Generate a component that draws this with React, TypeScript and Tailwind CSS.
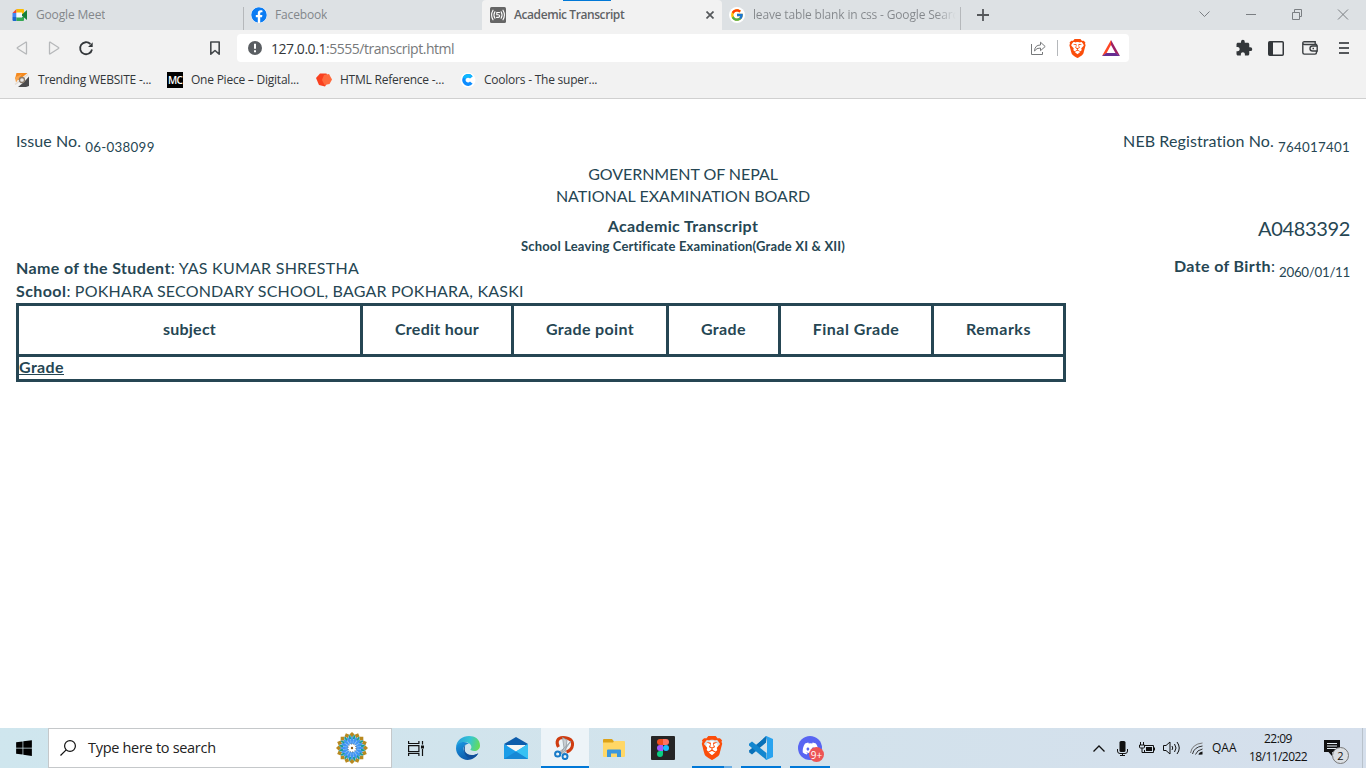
import type { ReactNode } from "react";
import { FaDiscord, FaFacebook, FaWindows } from "react-icons/fa";
import { FcGoogle } from "react-icons/fc";
import { SiBrave } from "react-icons/si";
import { MdExtension } from "react-icons/md";

function MeetIcon() {
  return (
    <svg width="16" height="16" viewBox="0 0 16 16">
      <path d="M.5 6l4-4v4z" fill="#ea4335" />
      <path d="M4.500 2h6.500v4H4.500z" fill="#fbbc04" />
      <path d="M.5 6h4v4h-4z" fill="#4285f4" />
      <path d="M.5 10h4v4h-3a1 1 0 0 1-1-1z" fill="#1967d2" />
      <path d="M4.500 10H12v3a1 1 0 0 1-1 1H4.500z" fill="#34a853" />
      <path d="M9 8l6-5v10z" fill="#188038" />
      <path d="M10 2h1a1 1 0 0 1 1 1v2.500L9 8z" fill="#fbbc04" />
      <path d="M4.500 5.500H10v5H4.500z" fill="#f4f8ff" />
    </svg>
  );
}

function ServerIcon() {
  return (
    <svg width="16" height="16" viewBox="0 0 16 16">
      <rect width="16" height="16" rx="1.500" fill="#666" />
      <g fill="none" stroke="#fff" strokeWidth="1.100" strokeLinecap="round">
        <path d="M3 3.200Q.2 8 3 12.800M13 3.200Q15.800 8 13 12.800" />
        <path d="M4.900 4.800Q3 8 4.900 11.200M11.100 4.800Q13 8 11.100 11.200" />
        <path d="M9.500 5.500H6.800v2.200h1.500q1.300 0 1.300 1.300T8.200 10.400H6.600" />
      </g>
    </svg>
  );
}

function BraveIcon({ size }: { size: number }) {
  return (
    <span className="grid place-items-center">
      <span className="col-start-1 row-start-1 h-[60%] w-[50%] rounded-full bg-white" />
      <SiBrave size={size} color="#fb4d0a" className="col-start-1 row-start-1" />
    </span>
  );
}

function Tab({ icon, title, className }: { icon: ReactNode; title: string; className: string }) {
  return (
    <div className={`flex h-[30px] shrink-0 items-center whitespace-nowrap ${className}`}>
      {icon}
      <span className="ml-2 overflow-hidden">{title}</span>
    </div>
  );
}

function TabStrip() {
  return (
    <div className="flex h-[30px] bg-[#dde1e4] text-[12px] tracking-[-0.16px] text-[#83878b]">
      <Tab className="w-[243px] pl-3" icon={<MeetIcon />} title="Google Meet" />
      <div className="mt-[7px] h-[23px] w-px bg-[#b5b8bb]" />
      <Tab className="w-[238px] pl-[7px]" icon={<FaFacebook size={16} color="#0b7cf3" className="rounded-full bg-white" />} title="Facebook" />
      <div className="relative flex h-[30px] w-[240px] items-center rounded-t bg-[#f2f2f2] pl-2 font-semibold tracking-[-0.42px] text-[#5f6265]">
        <div className="absolute left-[81px] top-0 h-px w-12 bg-[#0078d7]" />
        <ServerIcon />
        <span className="ml-2 grow">Academic Transcript</span>
        <svg width="8" height="8" viewBox="0 0 8 8" className="mr-2">
          <path d="M.5 .5l7 7M7.500 .5l-7 7" stroke="#55585b" strokeWidth="1.700" />
        </svg>
      </div>
      <Tab
        className="w-[238px] pl-[7px] pr-[4px] [&>span:last-child]:bg-gradient-to-r [&>span:last-child]:from-[#83878b] [&>span:last-child]:from-90% [&>span:last-child]:to-[#dde1e4] [&>span:last-child]:bg-clip-text [&>span:last-child]:text-transparent"
        icon={<span className="shrink-0 rounded-full bg-white p-px"><FcGoogle size={14} /></span>}
        title="leave table blank in css - Google Search"
      />
      <div className="mt-[7px] h-[23px] w-px bg-[#b5b8bb]" />
      <svg width="12" height="12" viewBox="0 0 12 12" className="ml-4 mt-[9px]">
        <path d="M6 0v12M0 6h12" stroke="#55585b" strokeWidth="1.800" />
      </svg>
      <svg width="170" height="30" viewBox="-10 0 170 30" className="ml-auto" fill="none" stroke="#7a7e82">
        <path d="M-6.500 11.500l5 5 5-5" />
        <path d="M40 14.500h10" />
        <path d="M86.500 12.500h7v7h-7zM88.500 12v-2.500h7v7H94" />
        <path d="M132 9.500l10 10M142 9.500l-10 10" />
      </svg>
    </div>
  );
}

function Toolbar() {
  return (
    <div className="flex h-9 items-center bg-[#f2f2f2]">
      <svg width="237" height="36" viewBox="0 30 237 36" fill="none">
        <path d="M26.500 42.500v11q0 .8-.8.3L17.500 48.500q-.6-.5 0-1l8.200-5.300q.8-.4.800.3zM49.500 42.500v11q0 .8.8.3l8.200-5.300q.6-.5 0-1l-8.200-5.300q-.8-.4-.8.300z" stroke="#b6b8ba" strokeWidth="1.300" />
        <path d="M90.400 44A6 6 0 1 0 92 49.500" stroke="#33373a" strokeWidth="1.800" />
        <path d="M92.700 42.300v4.600h-4.600z" fill="#33373a" />
        <path d="M210.800 42h8.400v12.200L215 50.500l-4.200 3.700z" stroke="#45494c" strokeWidth="1.600" strokeLinejoin="round" />
      </svg>
      <div className="flex h-7 w-[892px] items-center rounded bg-white">
        <svg width="14" height="14" viewBox="0 0 14 14" className="ml-[11px]">
          <circle cx="7" cy="7" r="7" fill="#5a5e62" />
          <path d="M7 2.800v5M7 9.300v2" stroke="#fff" strokeWidth="2" />
        </svg>
        <span className="ml-[9px] mt-px text-[14px] tracking-[-0.46px] text-[#77797b]"><span className="text-[#33373a]">127.0.0.1</span>:5555/transcript.html</span>
        <svg width="27" height="16" viewBox="0 0 27 16" fill="none" stroke="#77797b" className="ml-auto">
          <path d="M.5 4v10.500h11V12" />
          <path d="M3.500 11q.3-6 6-6V2.200l4.700 4.300-4.700 4.200V8Q5.500 7.800 3.500 11z" strokeLinejoin="round" />
          <path d="M26.500 0v16" stroke="#b5b8bb" />
        </svg>
        <div className="ml-[10px] flex w-[18px] justify-center"><BraveIcon size={19} /></div>
        <svg width="18" height="16" viewBox="0 0 18 16" className="ml-4 mr-[9px]">
          <path d="M9 0L0 16l4.300-2.500L9 5z" fill="#ff4724" />
          <path d="M9 0l9 16-4.300-2.500L9 5z" fill="#9e1f63" />
          <path d="M0 16h18l-4.300-3H4.300z" fill="#662d91" />
        </svg>
      </div>
      <div className="ml-[106px] flex items-center">
        <MdExtension size={18} color="#33373a" />
        <svg width="16" height="15" viewBox="0 0 16 15" className="ml-[15px]">
          <rect x=".75" y=".75" width="14.500" height="13.500" rx="1" fill="none" stroke="#33373a" strokeWidth="1.500" />
          <path d="M1 1h4v13H1z" fill="#33373a" />
        </svg>
        <svg width="16" height="14" viewBox="0 0 16 14" className="ml-[18px]" fill="none" stroke="#3b3f42" strokeWidth="1.400">
          <path d="M14.500 5V3.500H2.500Q.8 3.400.8 2T2.500.8h10.700v2.500M.8 2v9.600q0 1.500 1.500 1.500h10.700q1.500 0 1.500-1.500V10" />
          <path d="M15.200 5H10.500a2.500 2.500 0 0 0 0 5h4.700zM10.500 7.500h1.500" />
        </svg>
        <svg width="10" height="12" viewBox="0 0 10 12" className="ml-[21px]">
          <path d="M0 1h10M0 6h10M0 11h10" stroke="#55585b" strokeWidth="1.800" />
        </svg>
      </div>
    </div>
  );
}

function Bookmark({ icon, label, className }: { icon: ReactNode; label: string; className: string }) {
  return (
    <div className={`flex items-center gap-2 ${className}`}>
      {icon}
      <span>{label}</span>
    </div>
  );
}

function Bookmarks() {
  return (
    <div className="flex h-[33px] items-center border-b border-[#d0d0d0] bg-[#f2f2f2] pb-1 pl-[14px] text-[12px] tracking-[-0.23px] text-[#33373a]">
      <Bookmark
        className="w-[153px]"
        label="Trending WEBSITE -..."
        icon={
          <svg width="16" height="16" viewBox="0 0 16 16">
            <path d="M2.500 1h11L5 8 1 7z" fill="#f58a1f" />
            <path d="M1 5.500l7-3.500-6 8.500z" fill="#f9a54e" />
            <path d="M15 4.500V14l-3 1H4l6-5z" fill="#4b4b4d" />
            <path d="M1 12.500L14 2.500" stroke="#e4dcd4" strokeWidth="1.500" />
            <circle cx="8" cy="8" r="2.500" fill="#e8e8e8" stroke="#8b7b6b" strokeWidth="1.300" />
          </svg>
        }
      />
      <Bookmark
        className="w-[149px]"
        label="One Piece – Digital..."
        icon={<span className="flex h-4 w-4 items-center justify-center bg-black text-[10px] font-semibold leading-none tracking-[-0.8px] text-white">MC</span>}
      />
      <Bookmark
        className="w-36"
        label="HTML Reference -..."
        icon={
          <svg width="16" height="16" viewBox="0 0 16 16">
            <path d="M4 1.500h6.500L13 8l-4 6.500L3 13 0 6z" fill="#f9401f" />
            <path d="M8 3l5-1 3 5.500-2.500 4.500-5 1L6 8z" fill="#ff6a3d" />
          </svg>
        }
      />
      <Bookmark
        className=""
        label="Coolors - The super..."
        icon={
          <svg width="16" height="16" viewBox="0 0 16 16">
            <circle cx="8" cy="8" r="7.500" fill="#fff" />
            <path d="M11.300 5.300A4.200 4.200 0 1 0 11.300 10.700" fill="none" stroke="#0c8cff" strokeWidth="3.400" />
            <path d="M4.200 6.200A4.200 4.200 0 0 1 11.300 5.300" fill="none" stroke="#10b8ff" strokeWidth="3.400" />
          </svg>
        }
      />
    </div>
  );
}

function Transcript() {
  return (
    <main className="flex grow flex-col bg-white px-4 pt-[31px] font-['Lato',sans-serif] text-base leading-[22px] text-[#264653] [font-variant-ligatures:none]">
      <div className="flex h-[33px] justify-between">
        <p><span className="tracking-[0.07px]">Issue No. </span><sub className="-bottom-[5px] text-[13.33px] tracking-[0.3px]">06-038099</sub></p>
        <p><span className="tracking-[0.1px]">NEB Registration No. </span><sub className="-bottom-[5px] text-[13.33px] tracking-[0.27px]">764017401</sub></p>
      </div>
      <div className="h-[52px] text-center">
        <p className="tracking-[-0.06px]">GOVERNMENT OF NEPAL</p>
        <p>NATIONAL EXAMINATION BOARD</p>
      </div>
      <div className="grid h-[41px] grid-cols-[1fr_auto_1fr] text-center">
        <div className="col-start-2">
          <h1 className="font-bold tracking-[0.36px]">Academic Transcript</h1>
          <h2 className="text-[13px] font-bold leading-[18px] tracking-[0.17px]">School Leaving Certificate Examination(Grade XI &amp; XII)</h2>
        </div>
        <p className="pt-0.5 text-right text-[20px] tracking-[-0.34px]">A0483392</p>
      </div>
      <div className="flex h-[46px] justify-between">
        <div className="leading-[23px]">
          <p className="tracking-[0.24px]"><b className="tracking-[0.37px]">Name of the Student</b>: YAS KUMAR SHRESTHA</p>
          <p className="tracking-[0.2px]"><b className="tracking-[0.42px]">School</b>: POKHARA SECONDARY SCHOOL, BAGAR POKHARA, KASKI</p>
        </div>
        <p className="-mt-px"><b className="tracking-[0.38px]">Date of Birth</b>: <sub className="-bottom-[5px] text-[13.33px] tracking-[-0.29px]">2060/01/11</sub></p>
      </div>
      <table className="mt-px w-[1050px] table-fixed border-separate border-spacing-0 border-[3px] border-[#264653]">
        <thead>
          <tr className="h-[51px] [&>th]:border-b-[3px] [&>th]:border-[#264653] [&>th]:p-0 [&>th]:pb-0.5 [&>th:not(:last-child)]:border-r-[3px]">
            <th className="w-[344px] tracking-[0.23px]">subject</th>
            <th className="w-[151px] tracking-[0.27px]">Credit hour</th>
            <th className="w-[155px] tracking-[0.35px]">Grade point</th>
            <th className="w-[112px] tracking-[0.38px]">Grade</th>
            <th className="w-[153px] tracking-[0.48px]">Final Grade</th>
            <th className="w-[129px] tracking-[0.51px]">Remarks</th>
          </tr>
        </thead>
        <tbody>
          <tr className="h-[22px]"><td colSpan={6} className="p-0 pb-0.5 font-bold leading-5 tracking-[0.38px] underline">Grade</td></tr>
        </tbody>
      </table>
    </main>
  );
}

const petals = Array.from({ length: 16 }, (_, i) => i * 22.5);

function Rosette() {
  return (
    <svg width="32" height="32" viewBox="-16 -16 32 32">
      <circle r="14" fill="#e3f1f0" />
      {petals.map((a) => (
        <g key={a} transform={`rotate(${a})`}>
          <path d="M0-4l1.200-4L0-12.500-1.200-8z" fill="#3f93f5" stroke="#3f93f5" strokeWidth=".8" />
          <path d="M0-16l2.600 2.600L0-11l-2.600-2.400z" fill="#b8891f" />
          <path d="M0-13v4" stroke="#1a9a94" strokeWidth="2" transform="rotate(11.250)" />
        </g>
      ))}
      <circle r="4" fill="#fff" stroke="#4a5560" strokeDasharray="1 1.500" />
      <circle r="1.200" fill="#8a5a1a" />
    </svg>
  );
}

function TaskButton({ children, className = "" }: { children: ReactNode; className?: string }) {
  return <div className={`flex h-10 w-[49px] shrink-0 items-center justify-center ${className}`}>{children}</div>;
}

function Underline({ className = "left-[5px] w-10 bg-[#0078d7]" }: { className?: string }) {
  return <div className={`absolute bottom-0 h-0.5 ${className}`} />;
}

function Taskbar() {
  return (
    <footer className="flex h-10 bg-gradient-to-r from-[#cfe6ee] via-[#d2e3ec] to-[#d5dfec] text-[#111]">
      <TaskButton className="!w-12"><FaWindows size={18} color="#000" /></TaskButton>
      <div className="flex h-10 w-[344px] items-center border border-[#c5c8ca] bg-white pl-[11px] text-[14.5px] tracking-[-0.3px] text-[#222]">
        <svg width="16" height="16" viewBox="0 0 16 16" fill="none" stroke="#111" strokeWidth="1.200">
          <circle cx="10" cy="6" r="5.400" />
          <path d="M6.200 9.800L.5 15.500" />
        </svg>
        <span className="ml-3 grow">Type here to search</span>
        <span className="mr-[23px]"><Rosette /></span>
      </div>
      <TaskButton className="!w-12">
        <svg width="16" height="15" viewBox="0 0 16 15" fill="none" stroke="#111" strokeWidth="1.200">
          <path d="M.6 0v2.500h10.300V0M.6 4.600h10.300v6H.6zM.6 15v-2.500h10.300V15M14.500 0v3.500M14.500 8v7" />
          <path d="M13 4.500h3v3h-3z" fill="#111" stroke="none" />
        </svg>
      </TaskButton>
      <TaskButton className="ml-[3px]">
        <svg width="24" height="24" viewBox="0 0 24 24">
          <defs>
            <linearGradient id="edgeTop" x1="0" y1=".3" x2="1" y2=".5"><stop offset="0" stopColor="#259bdf" /><stop offset=".55" stopColor="#36c6d2" /><stop offset="1" stopColor="#65dc58" /></linearGradient>
            <linearGradient id="edgeLeft" x1="0" y1="0" x2=".7" y2="1"><stop offset="0" stopColor="#1a9be5" /><stop offset="1" stopColor="#0c4fa0" /></linearGradient>
          </defs>
          <path d="M0 12C0-3 24-4 24 9.500c0 5-5 6.500-9 4.800-1.500-.7.400-1.300.400-3.300C15 5 4 4 0 12z" fill="url(#edgeTop)" />
          <path d="M0 12c1-6 9-8 13-4-5-.5-7 5-4 8.500 3 3.500 9 4 13.300.8C18 25 9 26 3.500 20.500 1 18 0 15 0 12z" fill="url(#edgeLeft)" />
          <path d="M9.200 8.800c-3.500 5 0 13 6 13.800 3-.6 5.500-2.500 7.100-5.300-5 3-12 2-13.300-2-.7-2.600.400-5.500.200-6.500z" fill="#114f99" />
        </svg>
      </TaskButton>
      <TaskButton className="-ml-px">
        <svg width="24" height="22" viewBox="0 0 24 22">
          <path d="M0 7l12-7 12 7-12 7z" fill="#0d5cab" />
          <path d="M3 8h18v7H3z" fill="#f5f5f5" />
          <path d="M0 7l12 7.500L24 7v15H0z" fill="#1b9de8" />
          <path d="M24 7L12 14.500 24 22z" fill="#37c1f3" />
          <path d="M0 22l12-7.500L24 22z" fill="#1788d5" />
        </svg>
      </TaskButton>
      <TaskButton className="ml-px !w-12 border-b-2 border-[#0078d7] bg-[#edf4f8]">
        <svg width="22" height="24" viewBox="0 0 22 24" className="mt-px">
          <path d="M4.500 11C1.500 6 3.500 1.500 9 1.500c7 0 10 3.500 9.500 7.500-.4 4-3 6-6 7" fill="none" stroke="#cf3c10" strokeWidth="3" />
          <path d="M8.500 1.500L13 4l-1.500 12-3 2L7 17l3-5zM17 5l-6.500 9.500L6 18l-1.500-1.500 6-4.500z" fill="#c9ced2" stroke="#8e979d" strokeWidth=".7" />
          <circle cx="3.700" cy="18" r="2.600" fill="none" stroke="#187bc8" strokeWidth="2" />
          <circle cx="11" cy="20.600" r="2.500" fill="none" stroke="#187bc8" strokeWidth="2" />
        </svg>
      </TaskButton>
      <TaskButton>
        <svg width="22" height="18" viewBox="0 0 22 18">
          <path d="M0 1q0-1 1-1h8l2 2.500V5H0z" fill="#dda218" />
          <path d="M0 3.500h10L11.500 2H21q1 0 1 1v14q0 1-1 1H1q-1 0-1-1z" fill="#ffd766" />
          <path d="M4 18v-6.500q0-1 1-1h12q1 0 1 1V18h-4v-3.500H8V18z" fill="#3b97dc" />
        </svg>
      </TaskButton>
      <TaskButton>
        <svg width="24" height="24" viewBox="0 0 24 24">
          <rect width="24" height="24" rx="1" fill="#252525" />
          <path d="M12 3H9a3 3 0 0 0 0 6h3z" fill="#f24e1e" /><path d="M12 3h3a3 3 0 0 1 0 6h-3z" fill="#ff7262" />
          <path d="M12 9H9a3 3 0 0 0 0 6h3z" fill="#a259ff" /><circle cx="15" cy="12" r="3" fill="#1abcfe" />
          <path d="M12 15H9a3 3 0 1 0 3 3z" fill="#0acf83" />
        </svg>
      </TaskButton>
      <TaskButton className="relative"><BraveIcon size={24} /><Underline className="left-[5px] w-8 bg-[#0078d7]" /><Underline className="left-[37px] w-2 bg-[#6aaee4]" /></TaskButton>
      <TaskButton className="relative">
        <svg width="24" height="24" viewBox="0 0 24 24">
          <path d="M18 0l-1 6L3.200 17.500 0 15.500v-1z" fill="#0a6db5" />
          <path d="M17 0v6.500L3 18.500l-3-2.300L16.500.5z" fill="#0870b8" />
          <path d="M0 7.800l3-2.300L17.500 17v7L0 9.500z" fill="#1286cf" />
          <path d="M17.300 0L24 3v18l-6.700 3-1-1 1.700-1V2l-1.500-1z" fill="#29a3ef" />
        </svg>
        <Underline />
      </TaskButton>
      <TaskButton className="relative">
        <span className="ml-px flex h-6 w-6 items-center justify-center rounded-full bg-[#5865f2]"><FaDiscord size={17} color="#fff" /></span>
        <span className="absolute left-6 top-[19px] flex h-[15px] w-[15px] items-center justify-center rounded-full bg-[#ed5555] text-[10px] leading-none text-white">9+</span>
        <Underline />
      </TaskButton>
      <div className="ml-auto flex items-center">
        <svg width="12" height="7" viewBox="0 0 12 7" fill="none" stroke="#111" strokeWidth="1.300"><path d="M.5 6.500L6 1l5.500 5.500" /></svg>
        <svg width="11" height="15" viewBox="0 0 11 15" className="ml-3" fill="none" stroke="#111">
          <rect x="2.500" y="0" width="6" height="11" rx="1.500" fill="#111" stroke="none" />
          <path d="M.5 8v2q0 2.500 2.500 2.500h5q2.500 0 2.500-2.500V8M5.500 12.500v2M3 14.500h5" />
        </svg>
        <svg width="16" height="12" viewBox="0 0 16 12" className="ml-[11px]" fill="none" stroke="#111">
          <path d="M5.500 4V3.500h9v7h-9V8" /><path d="M7 5h6v4H7zM15 5.500h1v3h-1z" fill="#111" stroke="none" />
          <path d="M1.500 0v3M4.500 0v3M.5 3h5v2q0 1-1 1h-3q-1 0-1-1zM3 6v4.500h3" />
        </svg>
        <svg width="17" height="14" viewBox="0 0 17 14" className="ml-2" fill="none" stroke="#111">
          <path d="M.5 4.500h2.500L7 1v12L3 9.500H.5zM9 5q1.500 2 0 4M11.500 3q3 4 0 8M14 1q4.500 6 0 12" />
        </svg>
        <svg width="13" height="13" viewBox="0 0 13 13" className="ml-[10px]" fill="none" stroke="#333">
          <path d="M.5 11Q2 2 12.500 1" stroke="#777" /><path d="M2.500 12Q4 5 12.500 4M5.500 12.500Q7 8 12.500 7" /><path d="M8.500 12.800Q9 10 12.500 9.500v3z" fill="#111" stroke="none" />
        </svg>
        <span className="ml-[9px] w-[37px] text-[12px]">QAA</span>
        <div className="flex w-[58px] flex-col items-center whitespace-nowrap text-[12px] leading-[18px] tracking-[-0.55px]"><span>22:09</span><span>18/11/2022</span></div>
        <div className="relative ml-[17px] mr-[20px] h-10 w-[18px]">
          <svg width="18" height="18" viewBox="0 0 18 18" className="mt-3">
            <path d="M0 0h16v12H8v4l-3.500-4H0z" fill="#111" /><path d="M3 3.500h10M3 6h10M3 8.500h10" stroke="#e5edf3" />
          </svg>
          <span className="absolute left-[8px] top-[19px] flex h-[17px] w-[17px] items-center justify-center rounded-full border border-[#777] bg-[#dbdfe3] text-[11px] leading-none">2</span>
        </div>
        <div className="mr-[3px] h-10 w-px bg-[#b9c2cb]" />
      </div>
    </footer>
  );
}

export default function App() {
  return (
    <div className="flex h-[768px] w-[1366px] flex-col overflow-hidden bg-white font-['Open_Sans',sans-serif]">
      <TabStrip />
      <Toolbar />
      <Bookmarks />
      <Transcript />
      <Taskbar />
    </div>
  );
}
